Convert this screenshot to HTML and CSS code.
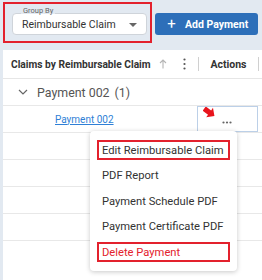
FILE: index.html
```html
<!DOCTYPE html>
<html lang="en">
<head>
  <meta charset="UTF-8" />
  <meta name="viewport" content="width=device-width, initial-scale=1" />
  <title>Payments</title>
  <link rel="stylesheet" href="styles.css">
</head>
<body>
  <div class="toolbar">
    <div class="group-box">
      <div class="field">
        <span class="field-label">Group By</span>
        <span class="field-value">Reimbursable Claim</span>
        <span class="caret"></span>
      </div>
    </div>
    <button class="add-btn"><span class="plus">+</span>Add Payment</button>
  </div>

  <div class="panel">
    <div class="grid-head">
      <div class="col-main">
        <span class="head-title">Claims by Reimbursable Claim</span>
        <svg class="sort-icon" width="8" height="10" viewBox="0 0 8 10">
          <path d="M4 9.5V1M1 4l3-3 3 3" fill="none" stroke="#b5b5b5" stroke-width="1.1"/>
        </svg>
      </div>
      <svg class="kebab" width="3" height="12" viewBox="0 0 3 12">
        <circle cx="1.5" cy="1.5" r="1.1" fill="#555"/>
        <circle cx="1.5" cy="6" r="1.1" fill="#555"/>
        <circle cx="1.5" cy="10.5" r="1.1" fill="#555"/>
      </svg>
      <div class="sep"></div>
      <div class="col-actions">Actions</div>
      <div class="sep"></div>
    </div>

    <div class="row group-row">
      <svg class="chevron" width="10" height="6" viewBox="0 0 10 6">
        <path d="M1 1l4 4 4-4" fill="none" stroke="#666" stroke-width="1.2"/>
      </svg>
      <span class="group-name">Payment 002</span>
      <span class="group-count">(1)</span>
    </div>

    <div class="row data-row">
      <a class="row-link" href="#">Payment 002</a>
      <div class="actions-cell">
        <svg class="pointer" width="15" height="13" viewBox="0 0 15 13">
          <path transform="translate(1.2 1.6) rotate(36) scale(1.15)" d="M0 -2.3H5.8V-5L11 0 5.8 5V2.3H0Z" fill="#e8141c"/>
        </svg>
        <svg class="dots" width="10" height="3" viewBox="0 0 10 3">
          <circle cx="1.5" cy="1.5" r="1.1" fill="#666"/>
          <circle cx="5" cy="1.5" r="1.1" fill="#666"/>
          <circle cx="8.5" cy="1.5" r="1.1" fill="#666"/>
        </svg>
      </div>
    </div>

    <div class="row"></div>
    <div class="row"></div>
    <div class="row"></div>
    <div class="row"></div>

    <div class="menu">
      <div class="menu-item marked">Edit Reimbursable Claim</div>
      <div class="menu-item">PDF Report</div>
      <div class="menu-item">Payment Schedule PDF</div>
      <div class="menu-item">Payment Certificate PDF</div>
      <div class="menu-item marked danger">Delete Payment</div>
    </div>
  </div>
</body>
</html>
```

FILE: styles.css
```css
* { box-sizing: border-box; margin: 0; padding: 0; }

body {
  font-family: Roboto, 'Liberation Sans', sans-serif;
  background: #e2e9f1;
  color: #333;
  width: 262px;
  height: 280px;
  overflow: hidden;
}

/* toolbar */
.toolbar {
  display: flex;
  align-items: flex-start;
  padding: 2px 0 0 3px;
  height: 50px;
}

.group-box {
  width: 149px;
  height: 41px;
  border: 2px solid #e3212d;
  padding: 9px 3px 6px 7px;
}

.field {
  position: relative;
  width: 135px;
  height: 22px;
  background: #fff;
  border: 1px solid #cfd4da;
  border-radius: 4px;
  display: flex;
  align-items: center;
  padding-left: 9px;
}

.field-label {
  position: absolute;
  left: 8px;
  top: -7px;
  font-size: 7.5px;
  line-height: 7px;
  color: #666;
  background: #e2e9f1;
  padding: 0 2px;
}

.field-value {
  font-size: 10.5px;
  color: #333;
}

.caret {
  position: absolute;
  right: 9px;
  top: 9px;
  border-left: 4px solid transparent;
  border-right: 4px solid transparent;
  border-top: 4px solid #666;
}

.add-btn {
  margin: 11px 0 0 3px;
  width: 103px;
  height: 22px;
  border: none;
  border-radius: 3px;
  background: #2d6fb9;
  color: #fff;
  font-family: inherit;
  font-weight: bold;
  font-size: 10.5px;
  display: flex;
  align-items: center;
  padding-left: 12px;
}

.plus {
  font-size: 15px;
  font-weight: 400;
  width: 9px;
  margin-right: 9px;
  line-height: 1;
}

/* grid */
.panel {
  position: relative;
  margin-left: 3px;
  background: #fff;
  height: 230px;
}

.grid-head {
  display: flex;
  align-items: center;
  height: 29px;
  border-bottom: 1px solid #e6e6e6;
  padding-left: 8px;
}

.col-main {
  flex: 1;
  display: flex;
  align-items: center;
}

.head-title {
  font-weight: bold;
  font-size: 10.2px;
  color: #333;
}

.sort-icon { margin-left: 8px; }

.kebab { margin-right: 12px; }

.sep {
  width: 1px;
  height: 14px;
  background: #d0d0d0;
}

.col-actions {
  width: 59px;
  text-align: center;
  font-weight: bold;
  font-size: 10.5px;
  color: #333;
}

.grid-head .sep:last-child { margin-right: 3px; }

.row {
  display: flex;
  align-items: center;
  height: 27px;
  border-bottom: 1px solid #e8e8e8;
}

.group-row { padding-left: 15px; }

.chevron { margin-right: 9px; }

.group-name {
  font-size: 12.4px;
  color: #555;
}

.group-count {
  font-size: 12.4px;
  color: #555;
  margin-left: 5px;
}

.data-row {
  padding-left: 52px;
  align-items: stretch;
}

.row-link {
  flex: 1;
  align-self: center;
  font-size: 10px;
  color: #2f7fd6;
}

.actions-cell {
  position: relative;
  width: 61px;
  margin-right: 4px;
  border: 1px solid #bcd0e8;
  display: flex;
  align-items: center;
}

.pointer {
  position: absolute;
  left: 5px;
  top: 0;
}

.dots {
  margin: 6px 0 0 24px;
}

/* context menu */
.menu {
  position: absolute;
  left: 87px;
  top: 81px;
  width: 147px;
  padding: 9px 7px;
  background: #fff;
  border-radius: 4px;
  box-shadow: 0 1px 5px rgba(0, 0, 0, 0.22);
  display: flex;
  flex-direction: column;
  gap: 5.5px;
}

.menu-item {
  height: 20px;
  border: 2px solid transparent;
  padding-left: 3px;
  display: flex;
  align-items: center;
  font-size: 11.2px;
  color: #333;
  white-space: nowrap;
}

.menu-item.marked { border-color: #e3212d; }

.menu-item.danger { color: #e3212d; }
```
